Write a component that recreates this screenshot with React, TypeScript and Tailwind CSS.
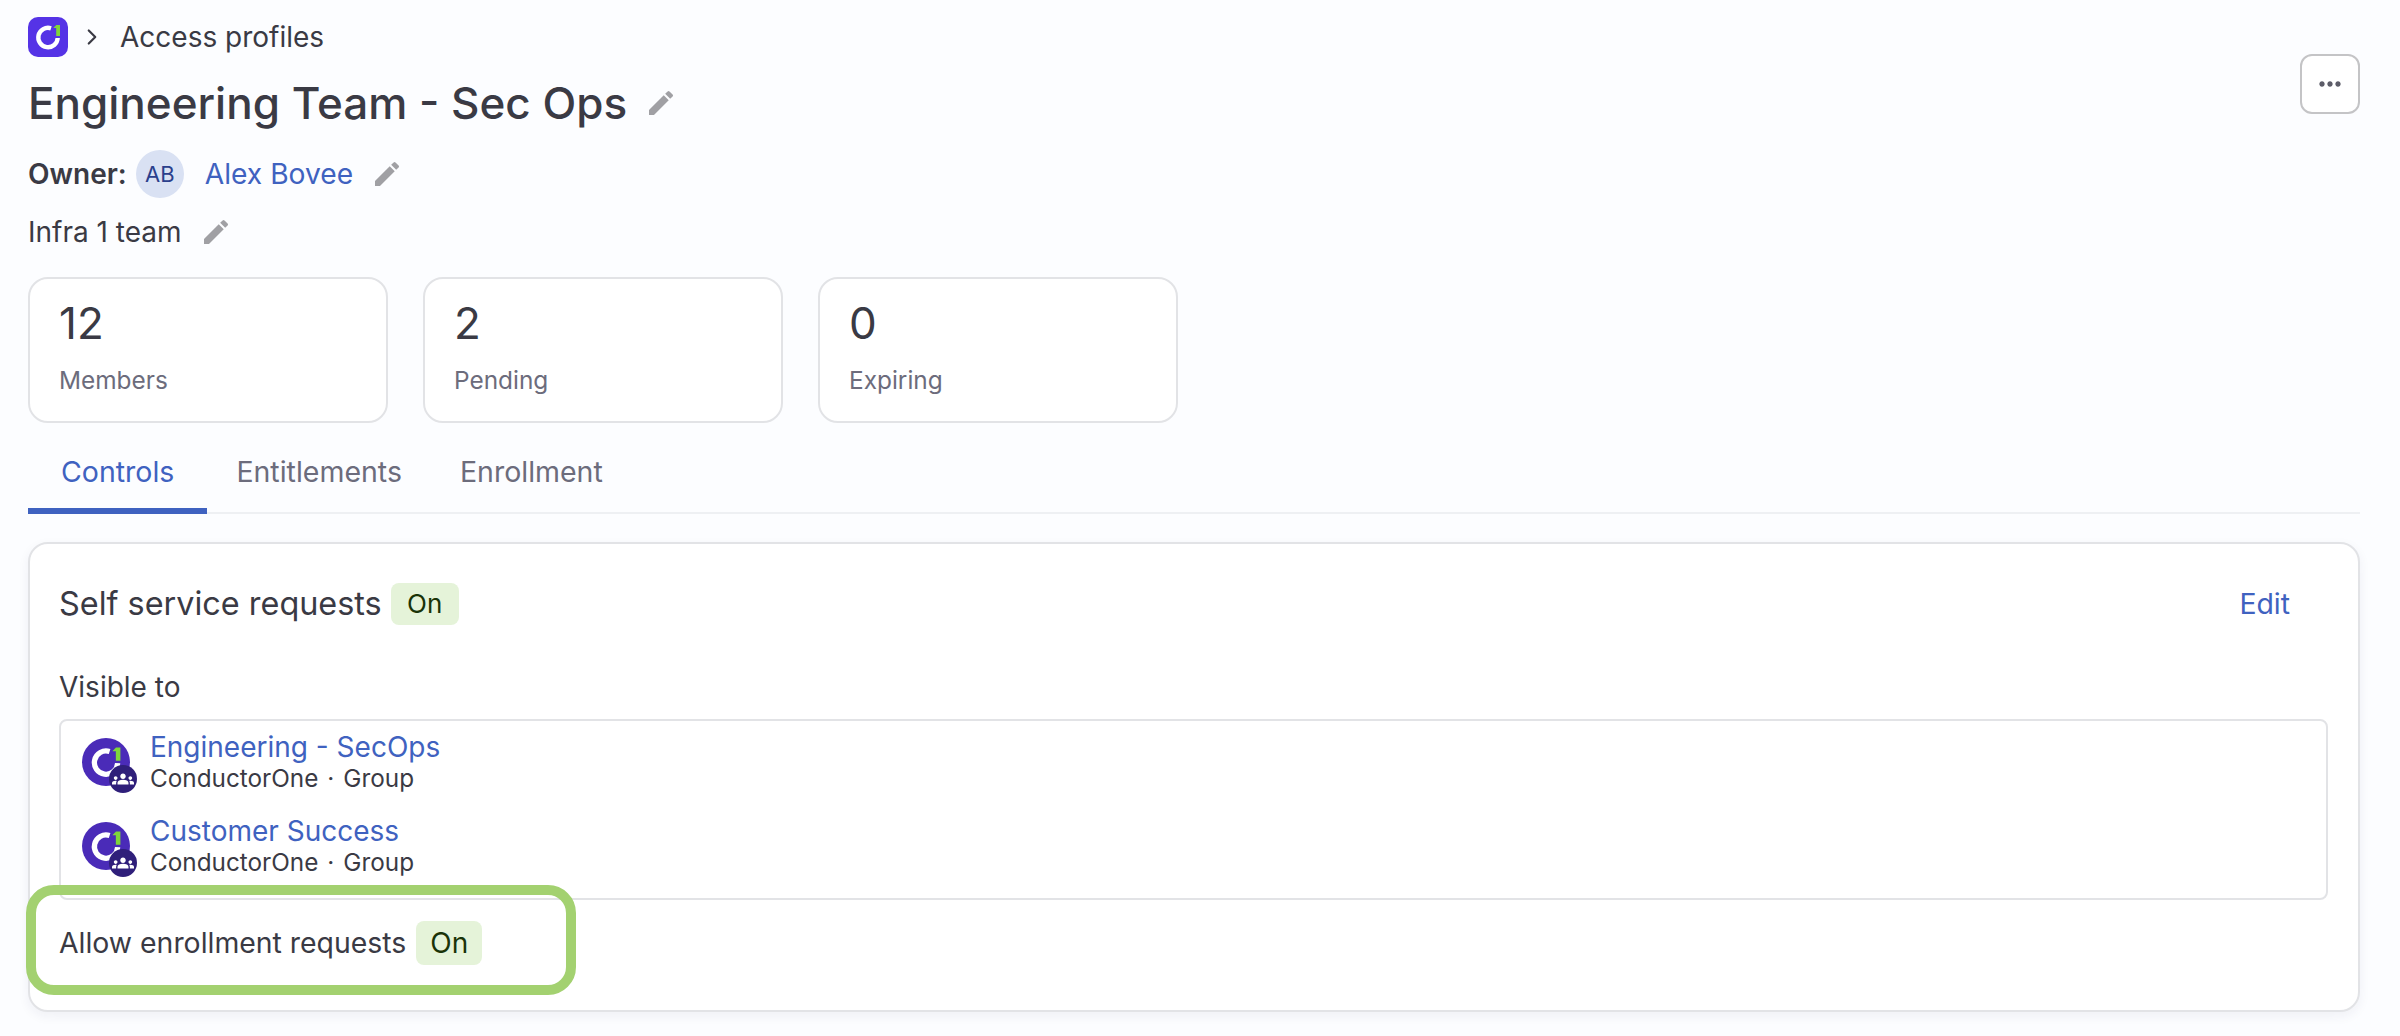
import React from 'react';
import { ChevronRight } from 'lucide-react';
import { MdEdit, MdGroups, MdMoreHoriz } from 'react-icons/md';

const stats = [
  { value: '12', label: 'Members' },
  { value: '2', label: 'Pending' },
  { value: '0', label: 'Expiring' },
];

const groups = ['Engineering - SecOps', 'Customer Success'];

const Pencil = ({ className }: { className: string }) => (
  <MdEdit className={`text-[#a0a0a4] ${className}`} size={32} />
);

const OnBadge = ({ className }: { className: string }) => (
  <span className={`flex items-center justify-center rounded-lg bg-[#e5f3d9] text-[#1a3308] ${className}`}>On</span>
);

const LogoMark = () => (
  <svg viewBox="0 0 40 40" className="h-full w-full">
    <path d="M23 11.3 A9.7 9.7 0 1 0 29.7 21" fill="none" stroke="#fff" strokeWidth="4.4" />
    <path d="M25.3 11 l3 -3 h3.7 v11 h-3.8 v-8 h-2.9 z" fill="#7fd63a" />
  </svg>
);

const GroupRow = ({ name }: { name: string }) => (
  <div className="flex h-[84px] items-start gap-[13px]">
    <div className="relative mt-[1px] h-[55px] w-[55px] shrink-0">
      <div className="h-12 w-12 rounded-full bg-[#4a2bb8]">
        <LogoMark />
      </div>
      <div className="absolute bottom-0 right-0 flex h-7 w-7 items-center justify-center rounded-full bg-[#2f1f7a] text-white">
        <MdGroups size={22} />
      </div>
    </div>
    <div className="-mt-[6px] flex flex-col">
      <a className="text-[28px] leading-[32px] text-[#3f62c0]">{name}</a>
      <div className="flex text-[24.3px] leading-[30px] text-[#3a3a44]">
        <span>ConductorOne</span>
        <span className="mx-[9px]">·</span>
        <span>Group</span>
      </div>
    </div>
  </div>
);

export default function App() {
  return (
    <div className="min-h-screen bg-[#fcfdff] pl-7 pr-10 pt-[17px] font-['Inter',sans-serif] text-[#3a3a44]">
      <div className="flex items-start justify-between">
        <div>
          <div className="flex h-10 items-center">
            <div className="h-10 w-10 rounded-[10px] bg-[#5533e6]">
              <LogoMark />
            </div>
            <ChevronRight className="ml-[11px] h-[26px] w-[26px]" strokeWidth={2} />
            <span className="ml-[15px] text-[28px] leading-10">Access profiles</span>
          </div>
          <div className="mt-[18px] flex h-14 items-center">
            <h1 className="text-[44px] font-medium leading-[56px]">Engineering Team - Sec Ops</h1>
            <Pencil className="ml-[18px]" />
          </div>
          <div className="mt-[19px] flex h-12 items-center text-[28px]">
            <span className="font-semibold">Owner:</span>
            <div className="ml-[9px] flex h-12 w-12 items-center justify-center rounded-full bg-[#d9e1f3] text-[22px] text-[#2b3f8c]">AB</div>
            <a className="ml-[21px] text-[28.2px] text-[#3f62c0]">Alex Bovee</a>
            <Pencil className="ml-[18px]" />
          </div>
          <div className="mt-[14px] flex h-10 items-center text-[28px]">
            <span>Infra 1 team</span>
            <Pencil className="ml-[18px]" />
          </div>
        </div>
        <button className="mt-[37px] flex h-[60px] w-[60px] items-center justify-center rounded-xl border-2 border-[#c4c4c6] bg-white text-[#5c5c68]">
          <MdMoreHoriz size={32} />
        </button>
      </div>

      <div className="mt-[25px] flex gap-[35px]">
        {stats.map((s) => (
          <div key={s.label} className="h-[146px] w-[360px] rounded-[20px] border-2 border-[#e2e3e6] bg-white pl-[29px] pt-[16px]">
            <div className="text-[44px] leading-[56px]">{s.value}</div>
            <div className="mt-[13px] text-[24.4px] leading-8 text-[#6c6c7c]">{s.label}</div>
          </div>
        ))}
      </div>

      <div className="mt-[26px] flex h-[65px] border-b-2 border-[#eef0f3] text-[28.5px]">
        <div className="h-[65px] border-b-[6px] border-[#3f62c0] px-[33px] pt-[2px] text-[#3f62c0]">Controls</div>
        <div className="px-[29px] pt-[2px] text-[#6c6c7c]">Entitlements</div>
        <div className="px-[29px] pt-[2px] text-[#6c6c7c]">Enrollment</div>
      </div>

      <div className="mt-[28px] h-[470px] rounded-[20px] border-2 border-[#e2e3e6] bg-white pl-[29px] pr-[30px] pt-[38px] shadow-[0_4px_12px_rgba(30,40,80,0.06)]">
        <div className="flex h-[44px] items-center">
          <h2 className="text-[32.4px]">Self service requests</h2>
          <OnBadge className="ml-[9px] -mt-[1px] h-[42px] w-[68px] text-[26px]" />
          <a className="ml-auto mr-[38px] text-[28.4px] text-[#3f62c0]">Edit</a>
        </div>
        <div className="mt-[43px] text-[28px] leading-[36px]">Visible to</div>
        <div className="mt-[14px] h-[181px] rounded-lg border-2 border-[#e2e3e6] pl-[21px] pt-[16px]">
          {groups.map((g) => (
            <GroupRow key={g} name={g} />
          ))}
        </div>
        <div className="relative mt-[21px] flex h-[44px] items-center">
          <span className="text-[28.4px]">Allow enrollment requests</span>
          <OnBadge className="ml-[10px] h-[44px] w-[66px] text-[28px]" />
          <div className="absolute -left-[33px] -top-[36px] h-[110px] w-[550px] rounded-[28px] border-[10px] border-[#a3d170]" />
        </div>
      </div>
    </div>
  );
}
